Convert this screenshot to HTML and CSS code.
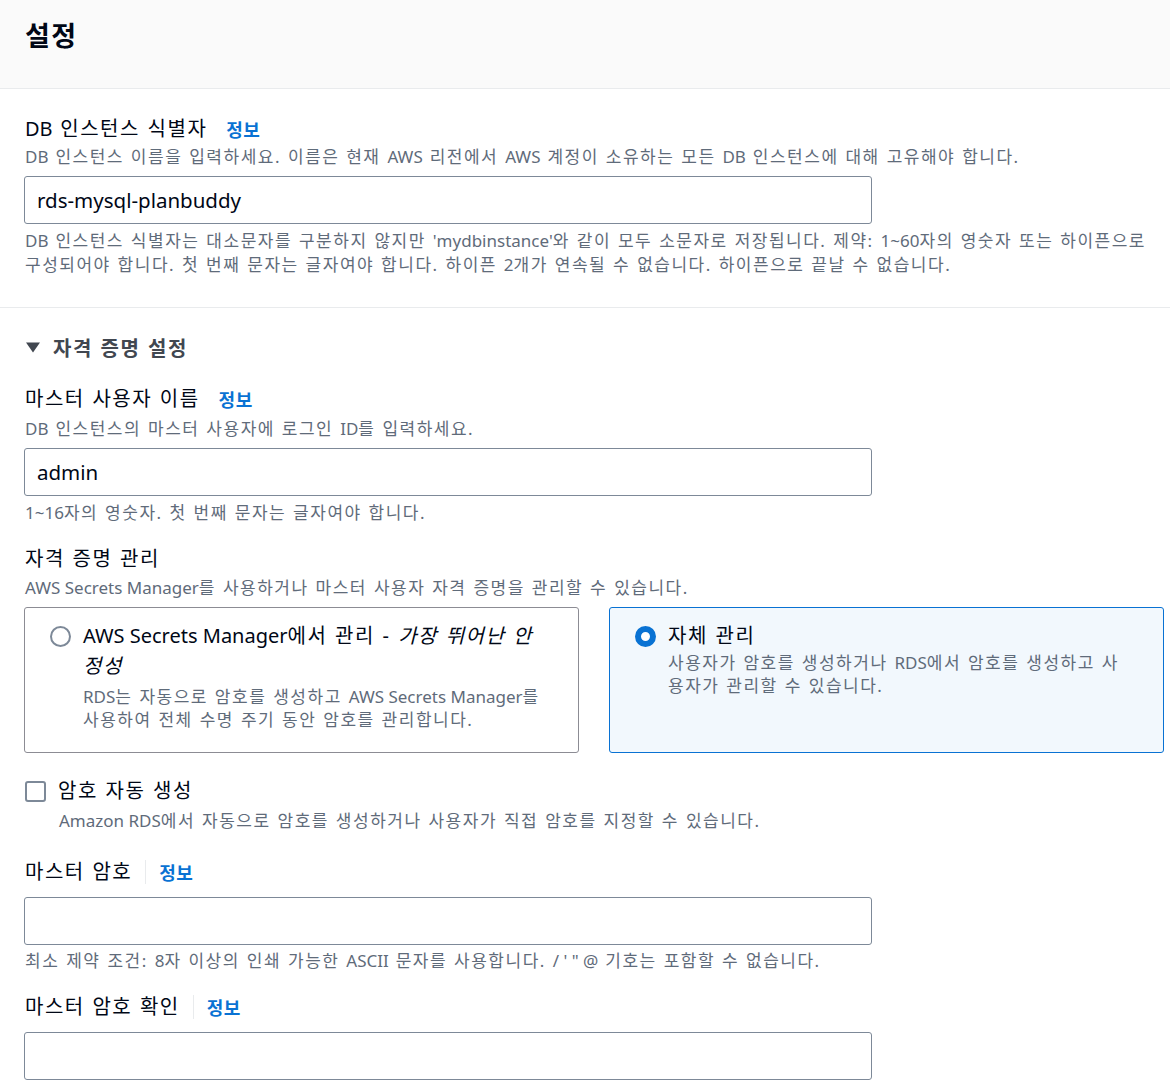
FILE: index.html
```html
<!DOCTYPE html>
<html lang="ko">
<head>
<meta charset="utf-8">
<title>설정</title>
<link rel="stylesheet" href="styles.css">
</head>
<body>
<div class="page">
  <header class="header">
    <h1 class="title">설정</h1>
  </header>

  <section class="section first">
    <div class="label-row">
      <span class="label"><span class="l">DB</span> 인스턴스 식별자</span>
      <a class="info wide">정보</a>
    </div>
    <div class="desc"><span class="l">DB</span> 인스턴스 이름을 입력하세요. 이름은 현재 <span class="l">AWS</span> 리전에서 <span class="l">AWS</span> 계정이 소유하는 모든 <span class="l">DB</span> 인스턴스에 대해 고유해야 합니다.</div>
    <div class="input">rds-mysql-planbuddy</div>
    <div class="desc constraint"><span class="l">DB</span> 인스턴스 식별자는 대소문자를 구분하지 않지만 <span class="l">'mydbinstance'</span>와 같이 모두 소문자로 저장됩니다. 제약: <span class="l">1~60</span>자의 영숫자 또는 하이픈으로<br>구성되어야 합니다. 첫 번째 문자는 글자여야 합니다. 하이픈 <span class="l">2</span>개가 연속될 수 없습니다. 하이픈으로 끝날 수 없습니다.</div>
  </section>

  <section class="section second">
    <div class="expander">
      <svg class="caret" width="16" height="12" viewBox="0 0 16 12"><path d="M1 1.5h14L8 11.5z" fill="#414750"/></svg>
      <span>자격 증명 설정</span>
    </div>

    <div class="field f-user">
      <div class="label-row">
        <span class="label">마스터 사용자 이름</span>
        <a class="info wide">정보</a>
      </div>
      <div class="desc"><span class="l">DB</span> 인스턴스의 마스터 사용자에 로그인 <span class="l">ID</span>를 입력하세요.</div>
      <div class="input">admin</div>
      <div class="desc constraint"><span class="l">1~16</span>자의 영숫자. 첫 번째 문자는 글자여야 합니다.</div>
    </div>

    <div class="field f-cred">
      <div class="label-row">
        <span class="label">자격 증명 관리</span>
      </div>
      <div class="desc"><span class="l">AWS Secrets Manager</span>를 사용하거나 마스터 사용자 자격 증명을 관리할 수 있습니다.</div>
      <div class="cards">
        <div class="card">
          <span class="radio"></span>
          <div class="card-body">
            <div class="card-title"><span class="l">AWS Secrets Manager</span>에서 관리 - <em>가장 뛰어난 안</em><br><em>정성</em></div>
            <div class="card-desc tall"><span class="l">RDS</span>는 자동으로 암호를 생성하고 <span class="l">AWS Secrets Manager</span>를<br>사용하여 전체 수명 주기 동안 암호를 관리합니다.</div>
          </div>
        </div>
        <div class="card selected">
          <span class="radio on"></span>
          <div class="card-body">
            <div class="card-title">자체 관리</div>
            <div class="card-desc">사용자가 암호를 생성하거나 <span class="l">RDS</span>에서 암호를 생성하고 사<br>용자가 관리할 수 있습니다.</div>
          </div>
        </div>
      </div>
    </div>

    <div class="check-field">
      <span class="checkbox"></span>
      <div>
        <div class="check-label">암호 자동 생성</div>
        <div class="desc"><span class="l">Amazon RDS</span>에서 자동으로 암호를 생성하거나 사용자가 직접 암호를 지정할 수 있습니다.</div>
      </div>
    </div>

    <div class="field f-pass">
      <div class="label-row">
        <span class="label">마스터 암호</span>
        <span class="sep"></span>
        <a class="info">정보</a>
      </div>
      <div class="input no-desc"></div>
      <div class="desc constraint">최소 제약 조건: <span class="l">8</span>자 이상의 인쇄 가능한 <span class="l">ASCII</span> 문자를 사용합니다. <span class="l">/ ' " @</span> 기호는 포함할 수 없습니다.</div>
    </div>

    <div class="field f-confirm">
      <div class="label-row">
        <span class="label">마스터 암호 확인</span>
        <span class="sep"></span>
        <a class="info">정보</a>
      </div>
      <div class="input no-desc"></div>
    </div>
  </section>
</div>
</body>
</html>
```

FILE: styles.css
```css
* { box-sizing: border-box; }
html, body { margin: 0; padding: 0; background: #ffffff; }
body {
  font-family: "Noto Sans", "Noto Sans CJK KR", sans-serif;
  color: #000716;
  width: 1170px;
}
.page { width: 1170px; }

.header {
  background: #fafafa;
  height: 89px;
  border-bottom: 1px solid #e9ebed;
  padding: 16px 25px 0;
}
.title {
  margin: 0;
  font-size: 27px;
  line-height: 40px;
  font-weight: 700;
  letter-spacing: 1.5px;
  color: #000716;
}

.section {
  padding: 0 6px 0 24px;
}
.section.first {
  padding-top: 24px;
  padding-bottom: 30px;
  border-bottom: 1px solid #e9ebed;
}
.section.second { padding-top: 24px; }

/* Latin runs keep their natural spacing; Hangul is spaced out */
.l { letter-spacing: 0; word-spacing: 0; }

.label-row {
  display: flex;
  align-items: center;
  height: 32px;
  padding-left: 1px;
}
.label {
  font-size: 20px;
  line-height: 30px;
  letter-spacing: 1.5px;
  word-spacing: 1px;
  color: #000716;
}
.info {
  font-size: 18px;
  font-weight: 700;
  color: #0972d3;
  letter-spacing: 0.5px;
}
.info.wide { margin-left: 19px; }
.sep {
  width: 1px;
  height: 24px;
  background: #e9ebed;
  margin-left: 13px;
  margin-right: 13px;
}

.desc {
  font-size: 17px;
  line-height: 24px;
  letter-spacing: 1.5px;
  word-spacing: 1px;
  color: #5f6b7a;
  padding-left: 1px;
}
.input {
  margin-top: 8px;
  width: 848px;
  height: 48px;
  border: 1px solid #7d8998;
  border-radius: 3px;
  padding: 0 12px;
  font-size: 20.5px;
  line-height: 46px;
  color: #000716;
}
.section.first .input { margin-top: 7px; }
.input.no-desc { margin-top: 9px; }
.constraint { margin-top: 4px; }
.section.first .constraint { margin-top: 5px; }

.expander {
  display: flex;
  align-items: center;
  height: 30px;
  font-size: 20px;
  font-weight: 700;
  letter-spacing: 1.5px;
  word-spacing: 1px;
  color: #414750;
  padding-left: 1px;
}
.caret { margin-right: 12px; }

.f-user { margin-top: 21px; }
.f-user .label-row + .desc { margin-top: 2px; }
.f-user .input { margin-top: 7px; }
.f-user .constraint { margin-top: 5px; }
.f-cred { margin-top: 18px; }
.f-cred .label-row + .desc { margin-top: 1px; }
.f-pass { margin-top: 23px; }
.f-confirm { margin-top: 18px; }

.cards {
  margin-top: 7px;
  display: grid;
  grid-template-columns: 555px 555px;
  column-gap: 30px;
}
.card {
  border: 1px solid #8c8c94;
  border-radius: 3px;
  height: 146px;
  padding: 13px 28px 0 25px;
  display: flex;
  align-items: flex-start;
}
.card.selected {
  border-color: #0972d3;
  background: #f2f8fd;
}
.radio {
  flex: none;
  width: 21px;
  height: 21px;
  border: 2px solid #7d8998;
  border-radius: 50%;
  margin-top: 5px;
  margin-right: 12px;
  background: #fff;
}
.radio.on {
  border: 6px solid #0972d3;
}
.card-title {
  font-size: 20px;
  line-height: 30px;
  letter-spacing: 1.5px;
  word-spacing: 1px;
  color: #000716;
}
.card-title em { font-style: italic; }
.card-desc {
  font-size: 17px;
  line-height: 23px;
  letter-spacing: 1.5px;
  word-spacing: 1px;
  color: #5f6b7a;
}
.card-desc.tall { margin-top: 4px; }

.check-field {
  margin-top: 23px;
  display: flex;
  align-items: flex-start;
  padding-left: 1px;
}
.checkbox {
  flex: none;
  width: 21px;
  height: 21px;
  border: 2px solid #7d8998;
  border-radius: 3px;
  margin-top: 5px;
  margin-right: 12px;
}
.check-label {
  font-size: 20px;
  line-height: 30px;
  letter-spacing: 1.5px;
  word-spacing: 1px;
}
.check-field .desc { margin-top: 3px; }
```
